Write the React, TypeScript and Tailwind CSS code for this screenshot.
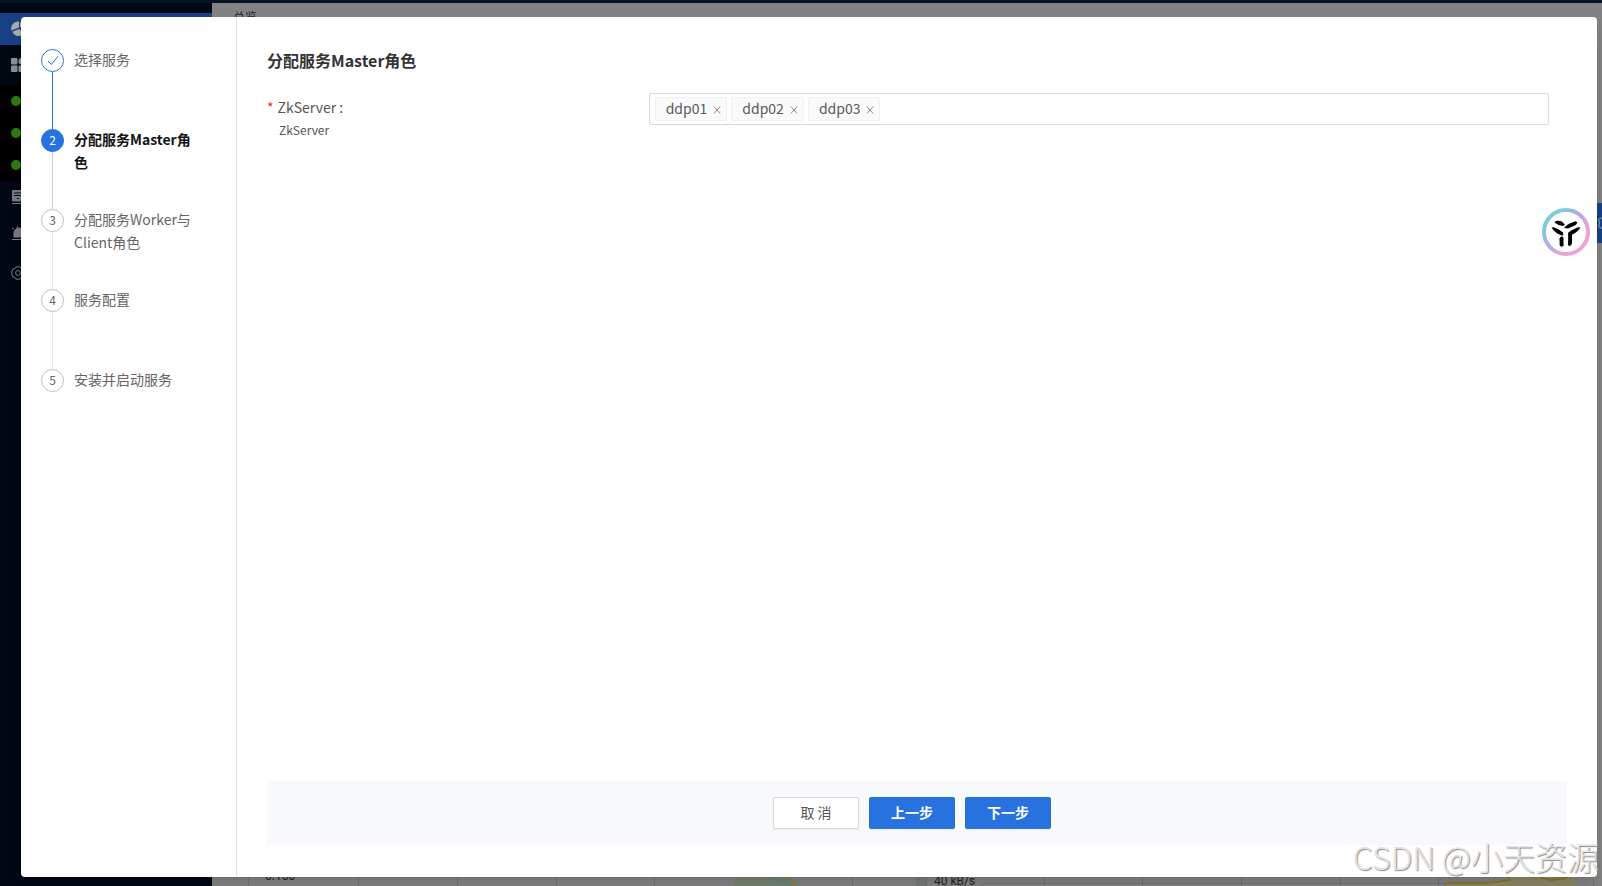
import { useState } from "react";

type Step = { title: string; status: "finish" | "process" | "wait" };

const steps: Step[] = [
    { title: "选择服务", status: "finish" },
    { title: "分配服务Master角色", status: "process" },
    { title: "分配服务Worker与Client角色", status: "wait" },
    { title: "服务配置", status: "wait" },
    { title: "安装并启动服务", status: "wait" },
];

const circleStyles = {
    finish: "border-[#2872e0] bg-white text-[#2872e0]",
    process: "border-[#2872e0] bg-[#2872e0] text-white",
    wait: "border-[#bfbfbf] bg-white text-[#666666]",
};

const tailStyles = {
    finish: "bg-[#2872e0]",
    process: "bg-[#c8ced8]",
    wait: "bg-[#e8e8e8]",
};

/** Dashboard that stays visible around the edges of the dialog */
const Backdrop = () => (
    <div className="flex h-full flex-col bg-[#061224]" aria-hidden="true">
        <div className="h-[3px]" />
        <div className="flex flex-1">
            <div className="flex w-[212px] flex-col bg-[#020813]">
                <div className="h-[10px]" />
                <div className="flex h-8 items-center bg-[#174184] pl-[11px]">
                    <svg width="16" height="16" viewBox="0 0 16 16" fill="#a9a9a9">
                        <path d="M8 0.6 A7 7 0 0 0 0.4 9.4 L8 6.4 Z" />
                        <path d="M1.2 10.8 A7 7 0 0 0 13 12.5 L8 8 Z" />
                        <path d="M9 1v5l5 3V5z" />
                    </svg>
                </div>
                <div className="flex h-10 items-center pl-[11px]">
                    <svg width="14" height="14" viewBox="0 0 14 14" fill="#8b8e93">
                        <rect width="6.500" height="6.500" rx="1" />
                        <rect x="7.500" width="6.500" height="6.500" rx="3" />
                        <rect y="7.500" width="6.500" height="6.500" rx="1" />
                        <rect x="7.500" y="7.500" width="6.500" height="6.500" rx="1" />
                    </svg>
                </div>
                <div className="flex flex-col bg-black pl-[11px]">
                    {[1, 2, 3].map(n => (
                        <div key={n} className="flex h-8 items-center">
                            <span className="size-[10px] rounded-full bg-[#2f7a10]" />
                        </div>
                    ))}
                </div>
                <div className="flex flex-col pl-[11px] text-[#777a80]">
                    <div className="flex h-8 items-center">
                        <svg width="16" height="14" viewBox="0 0 16 14" fill="none" stroke="currentColor">
                            <path d="M1.500 .5h13v10.500h-13z" fill="currentColor" />
                            <path d="M3 3h10M3 5.500h10M6 8.500h2" stroke="#020813" />
                            <path d="M1 13.5h14" />
                        </svg>
                    </div>
                    <div className="flex h-10 items-center">
                        <svg width="16" height="14" viewBox="0 0 16 14" fill="none" stroke="currentColor">
                            <path d="M3 11V7a4 4 0 0 1 10 0v4z" fill="currentColor" />
                            <path d="M1 13.5h14M1 2l2 1M6 0l.5 2M15 2l-2 1" />
                        </svg>
                    </div>
                    <div className="flex h-10 items-center">
                        <svg width="14" height="14" viewBox="0 0 14 14" fill="none" stroke="currentColor">
                            <path d="M5 .8h4l1 1.7 2.4.6.9 3.9-.9 3.9-2.4.6-1 1.7H5l-1-1.7-2.4-.6L.7 7l.9-3.9L4 2.5z" />
                            <circle cx="7" cy="7" r="2.4" />
                        </svg>
                    </div>
                </div>
            </div>
            <div className="flex flex-1 flex-col justify-between bg-[#808080]">
                <div className="flex h-7 items-center bg-[#828285] pl-[21px] text-xs text-[#222222]">总览</div>
                <svg className="h-[12px] w-full" viewBox="0 0 1390 12" preserveAspectRatio="xMinYMin slice">
                    <g stroke="#707070">
                        <path d="M36.5 0v12M146.5 0v12M245.5 0v12M344.5 0v12M442.5 0v12M541.5 0v12M640.5 0v12M714.5 0v12M832.5 0v12M930.5 0v12M1029.5 0v12M1128.5 0v12M1226.5 0v12M1325.5 0v12M1381.5 0v12" />
                        <path d="M769 9.5h465" />
                    </g>
                    <path d="M704 0h10v12h-10z" fill="#747878" />
                    <path d="M522 0h55l10 12h-65z" fill="#74806f" />
                    <path d="M561 3l4 5h10l4 4" fill="none" stroke="#3f8791" />
                    <path d="M574 3l6 5 5 4" fill="none" stroke="#a27a1c" />
                    <path d="M1234 12l2-2 40-1 21-2V0h67v12z" fill="#8a8465" />
                    <path d="M1233 12l2-3 40 0 22-3V0M1328 3q10 5 20 2l8-2" fill="none" stroke="#8d7310" strokeWidth="1.500" />
                    <text x="53" y="6" fontSize="12" fontFamily="Roboto" fill="#222222">0.150</text>
                    <text x="722" y="11" fontSize="12" fontFamily="Roboto" fill="#222222">40 kB/s</text>
                </svg>
            </div>
        </div>
    </div>
);

const StepItem = ({ step, index, last }: { step: Step; index: number; last: boolean }) => (
    <li className="flex min-h-20 gap-[10px]" aria-current={step.status === "process" ? "step" : undefined}>
        <div className="flex flex-col items-center">
            <span
                className={`flex size-[23px] shrink-0 items-center justify-center rounded-full border pb-px text-xs ${circleStyles[step.status]}`}
            >
                {step.status === "finish" ? (
                    <svg width="12" height="12" viewBox="0 0 12 12" fill="none" stroke="currentColor">
                        <path d="M1 7l3.400 3.500L11 2.200" />
                    </svg>
                ) : (
                    index + 1
                )}
            </span>
            {!last && <span className={`w-px flex-1 ${tailStyles[step.status]}`} />}
        </div>
        <span
            className={
                step.status === "process"
                    ? "-mt-px text-sm leading-[23px] font-bold text-[#141414]"
                    : "-mt-px text-sm leading-[23px] text-[#666666]"
            }
        >
            {step.title}
        </span>
    </li>
);

const HostSelect = () => {
    const [hosts, setHosts] = useState(["ddp01", "ddp02", "ddp03"]);
    return (
        <div className="flex h-8 items-center gap-1 rounded-[2px] border border-[#d9d9d9] bg-white px-[5px]">
            {hosts.map(host => (
                <span
                    key={host}
                    className="flex h-6 items-center gap-[6px] rounded-[2px] border border-[#f0f0f0] bg-[#fafafa] pr-[5px] pl-[10px] text-sm text-[#595959]"
                >
                    <span className="pb-0.5">{host}</span>
                    <button
                        type="button"
                        aria-label={`移除 ${host}`}
                        className="text-[#8c8c8c]"
                        onClick={() => setHosts(hosts.filter(h => h !== host))}
                    >
                        <svg width="8" height="9" viewBox="0 0 8 9" fill="none" stroke="currentColor">
                            <path d="M.8 1.500l6.400 7M7.200 1.500l-6.400 7" />
                        </svg>
                    </button>
                </span>
            ))}
            <input id="zk-server" className="min-w-0 flex-1 text-sm outline-none" />
        </div>
    );
};

const App = () => (
    <div className="relative h-screen overflow-hidden font-['Noto_Sans_CJK_SC',sans-serif]">
        <Backdrop />

        {/* settings handle behind the dialog edge */}
        <div className="absolute top-[203px] right-0 flex h-10 w-[5px] items-center overflow-hidden bg-[#174184]">
            <svg width="14" height="14" viewBox="0 0 14 14" fill="none" stroke="#9aa0aa" className="shrink-0">
                <path d="M5 .8h4l1 1.7 2.4.6.9 3.9-.9 3.9-2.4.6-1 1.7H5l-1-1.7-2.4-.6L2.500 7l-.9-3.9L4 2.5z" />
            </svg>
        </div>

        <div
            role="dialog"
            aria-labelledby="dialog-title"
            className="absolute top-[17px] right-[5px] bottom-[9px] left-[21px] flex rounded bg-white shadow-lg"
        >
            <ol className="w-[216px] shrink-0 border-r border-[#e3e3e3] pt-8 pr-10 pl-5">
                {steps.map((step, i) => (
                    <StepItem key={step.title} step={step} index={i} last={i === steps.length - 1} />
                ))}
            </ol>

            <div className="flex flex-1 flex-col px-[30px] pt-[31px] pb-8">
                <h1 id="dialog-title" className="text-base leading-6 font-bold text-[#333333]">
                    分配服务Master角色
                </h1>

                <form className="mt-[21px] grid grid-cols-[382fr_901fr] pr-[18px]">
                    <div>
                        <label htmlFor="zk-server" className="flex gap-1 text-sm leading-7 text-[#555555]">
                            <span className="text-[#f5222d]">*</span>
                            ZkServer :
                        </label>
                        <p className="pl-3 text-xs leading-[18px] text-[#555555]">ZkServer</p>
                    </div>
                    <HostSelect />
                </form>

                <div className="mt-auto flex h-16 items-center justify-center bg-[#f7f9fc] text-sm">
                    <button
                        type="button"
                        className="mr-[10px] h-8 w-[86px] rounded-[2px] border border-[#d9d9d9] bg-white pb-0.5 text-[#555555] shadow-xs"
                    >
                        取 消
                    </button>
                    <button type="button" className="mr-[10px] h-8 w-[86px] rounded-[2px] bg-[#2872e0] pb-0.5 font-bold text-white shadow-xs">
                        上一步
                    </button>
                    <button type="button" className="mr-[10px] h-8 w-[86px] rounded-[2px] bg-[#2872e0] pb-0.5 font-bold text-white shadow-xs">
                        下一步
                    </button>
                </div>
            </div>
        </div>

        {/* assistant badge */}
        <button type="button" aria-label="助手" className="absolute top-[208px] right-3 size-12">
            <svg viewBox="0 0 48 48">
                <defs>
                    <linearGradient id="ring" x1="0.1" y1="0.1" x2="0.9" y2="0.9">
                        <stop offset="0.1" stopColor="#7bcbdc" />
                        <stop offset="0.5" stopColor="#bba8e8" />
                        <stop offset="0.8" stopColor="#f0a3d0" />
                    </linearGradient>
                </defs>
                <circle cx="24" cy="24" r="22" fill="#ffffff" stroke="url(#ring)" strokeWidth="4" />
                <g fill="#000000">
                    <path d="M12.500 14.500q.5-2 3.500-1.700l3.500.4 3.500 3.600-2 1.200q-5-.5-8.500-3.500z" />
                    <path d="M22 20q2-3 5.500-4.500l6-2.200 2 1.200q-1 2.500-4 3.500l-5.500 2.500z" />
                    <path d="M9.500 19.500l2.500-.3q6 2.500 9 5.300l.3 3-2.300-.3q-6-2-9.500-7.700z" />
                    <path d="M38.500 19.500l-2.500-.3q-6 2.500-9.700 5.300l-.3 3 2.500-.3q6.500-2 10-7.700z" />
                    <path d="M17.500 30l2.500-2 1.500 2v8l-2.300.8-1.500-1.300z" />
                    <path d="M26.200 27l2-2 1.800 1.500V35q-.5 3-2.500 3.300l-1.500-1.300z" />
                </g>
            </svg>
        </button>

        <div className="pointer-events-none absolute right-[3px] bottom-[7px] text-[32px] leading-[46px] font-light text-[#e4e4e4] [text-shadow:1px_1px_1px_#888888]">
            CSDN @小天资源
        </div>
    </div>
);

export default App;
